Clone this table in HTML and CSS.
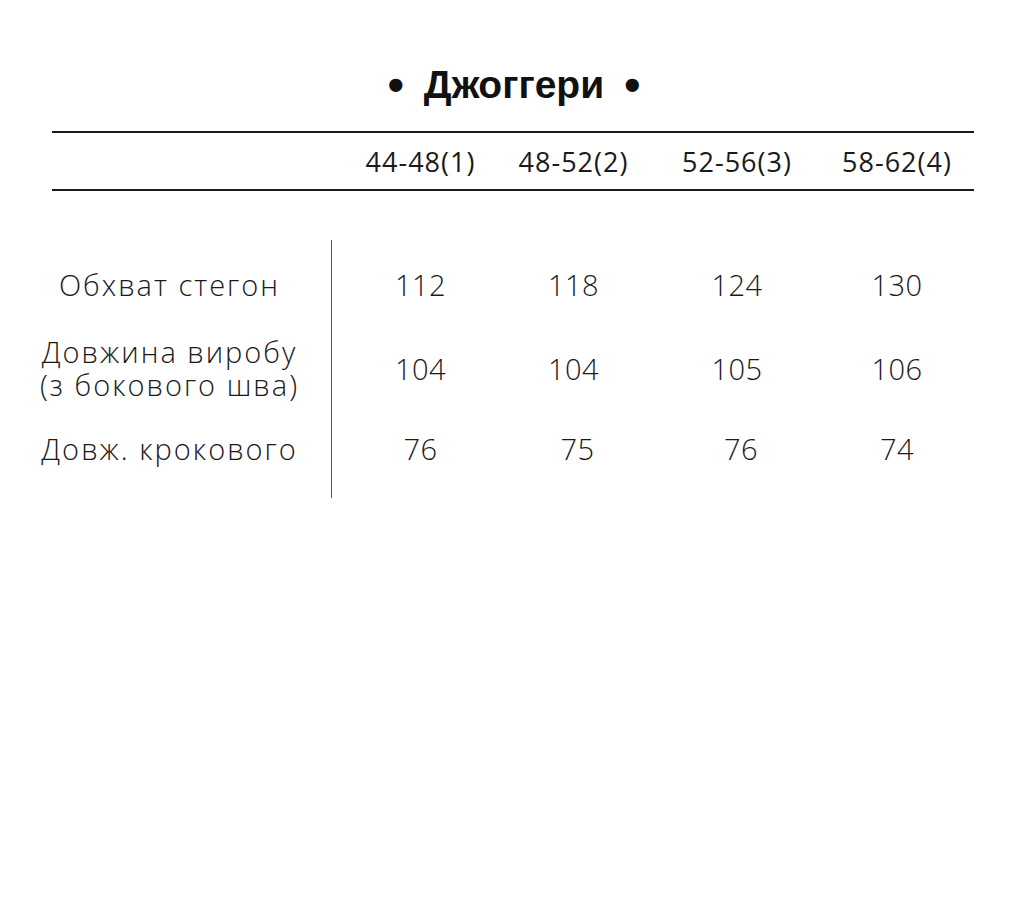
FILE: index.html
```html
<!DOCTYPE html>
<html lang="uk">
<head>
<meta charset="utf-8">
<title>Джоггери</title>
<link rel="stylesheet" href="styles.css">
</head>
<body>
<main class="page">
  <h1 class="title"><span class="dot">•</span><span>Джоггери</span><span class="dot">•</span></h1>
  <div class="head">
    <span class="head-empty"></span>
    <span class="size">44-48(1)</span>
    <span class="size">48-52(2)</span>
    <span class="size">52-56(3)</span>
    <span class="size">58-62(4)</span>
  </div>
  <div class="grid">
    <div class="divider"></div>
    <div class="label r1">Обхват стегон</div>
    <div class="val r1 c1">112</div>
    <div class="val r1 c2">118</div>
    <div class="val r1 c3">124</div>
    <div class="val r1 c4">130</div>
    <div class="label r2"><span class="line">Довжина виробу</span><span class="line">(з бокового шва)</span></div>
    <div class="val r2 c1">104</div>
    <div class="val r2 c2">104</div>
    <div class="val r2 c3">105</div>
    <div class="val r2 c4">106</div>
    <div class="label r3">Довж. крокового</div>
    <div class="val r3 c1">76</div>
    <div class="val r3 c2 shift">75</div>
    <div class="val r3 c3 shift">76</div>
    <div class="val r3 c4">74</div>
  </div>
</main>
</body>
</html>
```
FILE: styles.css
```css
html, body {
  margin: 0;
  padding: 0;
  background: #ffffff;
}
body {
  width: 1024px;
  height: 903px;
  color: #1a1a1a;
  font-family: "Open Sans", "DejaVu Sans", sans-serif;
}
.page {
  padding-top: 62px;
}
.title {
  margin: 0 0 0 4px;
  display: flex;
  justify-content: center;
  align-items: center;
  gap: 20px;
  height: 46px;
  font-family: "Liberation Sans", Arial, sans-serif;
  font-weight: 700;
  font-size: 39px;
  color: #111;
  line-height: 46px;
}
.title .dot {
  font-size: 46px;
}
.head {
  margin: 23px 50px 0 52px;
  border-top: 2px solid #1a1a1a;
  border-bottom: 2px solid #1a1a1a;
  height: 56px;
  display: grid;
  grid-template-columns: 292px 153px 153px 174px 146px;
  align-items: center;
}
.size {
  text-align: center;
  font-size: 27px;
  font-weight: 500;
  color: #1a1a1a;
  letter-spacing: 1px;
}
.grid {
  margin-top: 49px;
  display: grid;
  grid-template-columns: 331px 13px 153px 153px 174px 146px;
  grid-template-rows: 88px 80px 90px;
  align-items: center;
}
.divider {
  grid-column: 2;
  grid-row: 1 / -1;
  align-self: stretch;
  border-left: 1.5px solid #555;
}
.label {
  grid-column: 1;
  text-align: center;
  padding-left: 8px;
  font-size: 29px;
  font-weight: 300;
  line-height: 33px;
  letter-spacing: 2px;
  color: #1a1a1a;
}
.line {
  display: block;
  height: 33px;
}
.val {
  text-align: center;
  font-size: 29px;
  font-weight: 300;
  letter-spacing: 0.5px;
  color: #1a1a1a;
}
.r1 { grid-row: 1; }
.r2 { grid-row: 2; }
.r3 { grid-row: 3; padding-bottom: 10px; }
.c1 { grid-column: 3; }
.c2 { grid-column: 4; }
.c3 { grid-column: 5; }
.c4 { grid-column: 6; }
.shift { padding-left: 8px; }
```
